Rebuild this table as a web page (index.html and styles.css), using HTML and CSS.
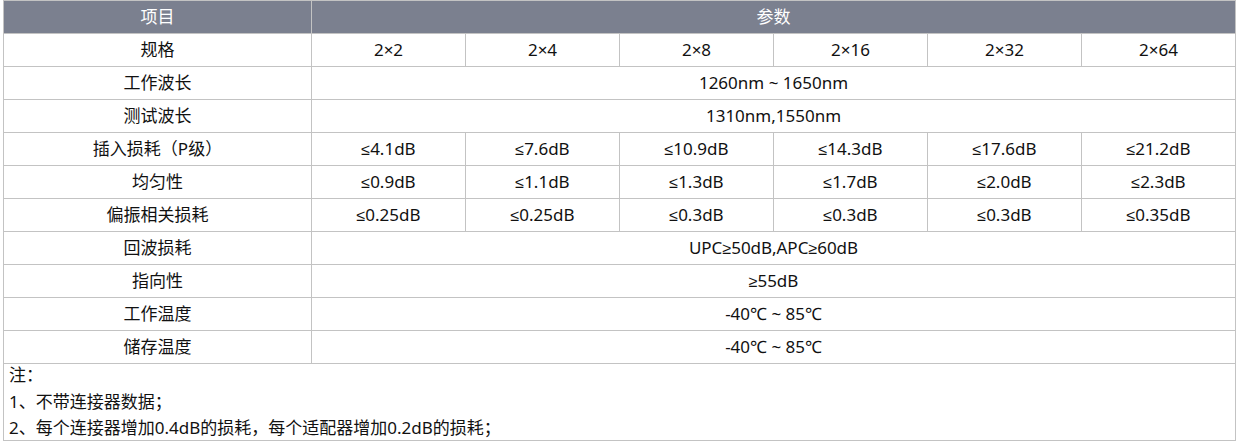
FILE: index.html
```html
<!DOCTYPE html>
<html lang="zh-CN">
<head>
<meta charset="utf-8">
<title>参数表</title>
<link rel="stylesheet" href="styles.css">
</head>
<body>
<div class="sheet">
<table class="spec">
  <colgroup>
    <col class="c-name">
    <col class="c-val"><col class="c-val"><col class="c-val"><col class="c-val"><col class="c-val"><col class="c-val">
  </colgroup>
  <thead>
    <tr class="head"><th>项目</th><th colspan="6">参数</th></tr>
  </thead>
  <tbody>
    <tr><td>规格</td><td>2×2</td><td>2×4</td><td>2×8</td><td>2×16</td><td>2×32</td><td>2×64</td></tr>
    <tr><td>工作波长</td><td colspan="6">1260nm ~ 1650nm</td></tr>
    <tr><td>测试波长</td><td colspan="6">1310nm,1550nm</td></tr>
    <tr><td>插入损耗（P级）</td><td><span class="sym">≤</span>4.1dB</td><td><span class="sym">≤</span>7.6dB</td><td><span class="sym">≤</span>10.9dB</td><td><span class="sym">≤</span>14.3dB</td><td><span class="sym">≤</span>17.6dB</td><td><span class="sym">≤</span>21.2dB</td></tr>
    <tr><td>均匀性</td><td><span class="sym">≤</span>0.9dB</td><td><span class="sym">≤</span>1.1dB</td><td><span class="sym">≤</span>1.3dB</td><td><span class="sym">≤</span>1.7dB</td><td><span class="sym">≤</span>2.0dB</td><td><span class="sym">≤</span>2.3dB</td></tr>
    <tr><td>偏振相关损耗</td><td><span class="sym">≤</span>0.25dB</td><td><span class="sym">≤</span>0.25dB</td><td><span class="sym">≤</span>0.3dB</td><td><span class="sym">≤</span>0.3dB</td><td><span class="sym">≤</span>0.3dB</td><td><span class="sym">≤</span>0.35dB</td></tr>
    <tr><td>回波损耗</td><td colspan="6">UPC<span class="sym">≥</span>50dB,APC<span class="sym">≥</span>60dB</td></tr>
    <tr><td>指向性</td><td colspan="6"><span class="sym">≥</span>55dB</td></tr>
    <tr><td>工作温度</td><td colspan="6">-40℃ ~ 85℃</td></tr>
    <tr><td>储存温度</td><td colspan="6">-40℃ ~ 85℃</td></tr>
  </tbody>
</table>
<div class="notes">
  <p>注：</p>
  <p>1、不带连接器数据；</p>
  <p>2、每个连接器增加0.4dB的损耗，每个适配器增加0.2dB的损耗；</p>
</div>
</div>
</body>
</html>
```

FILE: styles.css
```css
html, body {
  margin: 0;
  padding: 0;
  background: #ffffff;
}
body {
  font-family: "Noto Sans", "Noto Sans CJK SC", sans-serif;
  font-size: 17px;
  color: #111111;
}
.sheet {
  width: 1233px;
  margin-left: 3px;
}
.spec {
  border-collapse: collapse;
  table-layout: fixed;
  width: 1233px;
}
.c-name { width: 308px; }
.c-val { width: 154px; }
.spec th,
.spec td {
  border: 1px solid #c3c3c3;
  height: 32px;
  padding: 0;
  text-align: center;
  vertical-align: middle;
  font-weight: normal;
  line-height: 20px;
}
.sym {
  font-family: "Liberation Sans", "DejaVu Sans", sans-serif;
  font-size: 16px;
  line-height: 1;
}
.head th {
  background: #7b808f;
  color: #ffffff;
}
.notes {
  box-sizing: border-box;
  height: 77px;
  border: 1px solid #c3c3c3;
  border-top: none;
  padding: 0 0 0 5px;
  overflow: hidden;
}
.notes p {
  margin: 0;
  line-height: 26.5px;
}
.notes p:first-child {
  margin-top: -2px;
}
```
